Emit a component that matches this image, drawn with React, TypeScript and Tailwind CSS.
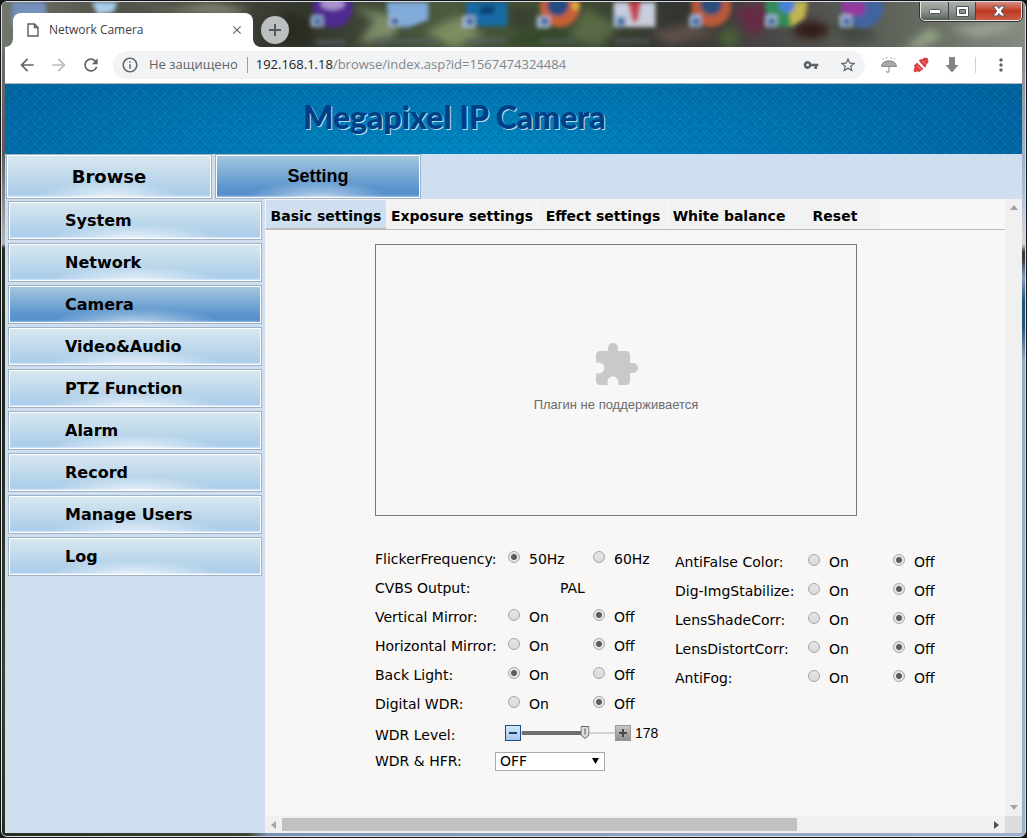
import { useState } from "react";
import {
  MdArrowBack,
  MdArrowForward,
  MdClose,
  MdExtension,
  MdInfoOutline,
  MdMoreVert,
  MdRefresh,
  MdStarBorder,
  MdVpnKey
} from "react-icons/md";

/* -------------------- Data -------------------- */

interface RadioRow {
  name: string;
  label: string;
  options: string[];
  value: string;
}

const menuItems = [
  "System",
  "Network",
  "Camera",
  "Video&Audio",
  "PTZ Function",
  "Alarm",
  "Record",
  "Manage Users",
  "Log"
];

const subTabs = [
  { title: "Basic settings", width: "w-[120px]" },
  { title: "Exposure settings", width: "w-[150px]" },
  { title: "Effect settings", width: "w-[130px]" },
  { title: "White balance", width: "w-[120px]" },
  { title: "Reset", width: "w-[90px]" }
];

const flicker: RadioRow = { name: "flicker", label: "FlickerFrequency:", options: ["50Hz", "60Hz"], value: "50Hz" };

const leftRows: RadioRow[] = [
  { name: "vmirror", label: "Vertical Mirror:", options: ["On", "Off"], value: "Off" },
  { name: "hmirror", label: "Horizontal Mirror:", options: ["On", "Off"], value: "Off" },
  { name: "backlight", label: "Back Light:", options: ["On", "Off"], value: "On" },
  { name: "dwdr", label: "Digital WDR:", options: ["On", "Off"], value: "Off" }
];

const rightRows: RadioRow[] = [
  { name: "antifalse", label: "AntiFalse Color:", options: ["On", "Off"], value: "Off" },
  { name: "stabilize", label: "Dig-ImgStabilize:", options: ["On", "Off"], value: "Off" },
  { name: "lensshade", label: "LensShadeCorr:", options: ["On", "Off"], value: "Off" },
  { name: "lensdistort", label: "LensDistortCorr:", options: ["On", "Off"], value: "Off" },
  { name: "antifog", label: "AntiFog:", options: ["On", "Off"], value: "Off" }
];

const glossy =
  "bg-[radial-gradient(ellipse_34%_40%_at_50%_100%,rgba(255,255,255,0.75),rgba(255,255,255,0)),linear-gradient(to_bottom,#d9e8ef,#b0d0e9_80%,#abcdea_92%,#e4f0fb)]";
const glossyActive =
  "bg-[radial-gradient(ellipse_34%_40%_at_50%_100%,rgba(255,255,255,0.6),rgba(255,255,255,0)),linear-gradient(to_bottom,#a6c9df,#5c95cd_75%,#5590cc_92%,#a9c9ec)]";

/* -------------------- Browser window -------------------- */

function Wallpaper() {
  return (
    <svg
      className="absolute left-0 top-0 h-[48px] w-full"
      viewBox="0 0 1027 48"
      preserveAspectRatio="none"
      aria-hidden="true"
    >
      <defs>
        <filter id="soft" x="-5%" y="-30%" width="110%" height="160%">
          <feGaussianBlur stdDeviation="2" />
        </filter>
        <filter id="softer" x="-5%" y="-30%" width="110%" height="160%">
          <feGaussianBlur stdDeviation="4.500" />
        </filter>
        <linearGradient id="grass" x1="0" x2="1" y1="0" y2="0">
          <stop offset="0" stopColor="#71776d" />
          <stop offset="0.08" stopColor="#5a5a50" />
          <stop offset="0.2" stopColor="#45443a" />
          <stop offset="0.3" stopColor="#33382d" />
          <stop offset="0.43" stopColor="#4c5a3f" />
          <stop offset="0.56" stopColor="#3f4b34" />
          <stop offset="0.66" stopColor="#343532" />
          <stop offset="0.75" stopColor="#4a4847" />
          <stop offset="0.9" stopColor="#646b60" />
          <stop offset="1" stopColor="#868c82" />
        </linearGradient>
      </defs>
      <rect width="1027" height="48" fill="url(#grass)" />
      <g filter="url(#softer)">
        <path d="M120 0l50 6 40-6 40 8-20 6-60-4z" fill="#7f8273" />
        <path d="M260 20l40 8-10 20h-30z" fill="#33352a" />
        <path d="M285 8l30 12-10 28-30-10z" fill="#2a2b22" />
        <path d="M350 4l24 14-16 24 34-6 10-20z" fill="#7c8c69" />
        <path d="M425 30l34-16 24 20-30 12z" fill="#7c8d60" />
        <path d="M500 40l50-18 30 16-40 8z" fill="#354a2a" />
        <path d="M510 4l28 4-10 20-18-4z" fill="#38402f" />
        <path d="M585 6l34 18-20 20-30-8z" fill="#596b44" />
        <path d="M650 30l40-8 30 10-50 12z" fill="#5b4f49" />
        <path d="M735 6l16 30 24-20-8-14z" fill="#662b44" />
        <circle cx="730" cy="36" r="10" fill="#486136" />
        <ellipse cx="812" cy="28" rx="18" ry="9" fill="#321b17" />
        <path d="M830 20l20 22 30-6-12-10z" fill="#43493f" />
        <path d="M905 46l26-20 14 8-20 12z" fill="#93a184" />
        <path d="M950 26l30 10 30-8 10-10z" fill="#9ba096" />
      </g>
      <g filter="url(#soft)">
        <path d="M10 0h34v20l-34 4z" fill="#7490bd" />
        <path d="M90 0h26l-4 10-16 3z" fill="#a9cdeb" />
        <circle cx="332" cy="6" r="20" fill="#4f2c91" />
        <ellipse cx="332" cy="2" rx="12" ry="6" fill="#a892cd" />
        <path d="M386 0h42v18l-22 8-18-6z" fill="#80abda" />
        <path d="M466 0h41v24h-41z" fill="#146ba5" />
        <path d="M480 4h14v8h-14z" fill="#0d426d" />
        <circle cx="560" cy="5" r="20" fill="#c86035" />
        <circle cx="558" cy="3" r="11" fill="#254c80" />
        <circle cx="576" cy="4" r="4" fill="#e2b13f" />
        <path d="M614 0h42v25h-42z" fill="#c8cedd" />
        <path d="M628 0h14l-4 20h-5z" fill="#c3434e" />
        <circle cx="712" cy="5" r="20" fill="#b85a38" />
        <circle cx="712" cy="2" r="11" fill="#294f7a" />
        <circle cx="787" cy="4" r="21" fill="#348c58" />
        <path d="M790 0h19l-3 16-14 9z" fill="#c2b44e" />
        <circle cx="788" cy="3" r="8" fill="#4b80d8" />
        <circle cx="864" cy="5" r="21" fill="#42639f" />
        <path d="M842 0h24v12l-20 4z" fill="#95379d" />
        <path d="M310 14h12v11h-12zM388 14h12v11h-12zM462 14h13v12h-13zM537 14h13v12h-13zM614 13h13v12h-13zM690 13h12v12h-12zM766 13h12v12h-12zM841 13h12v12h-12z" fill="#a8bfdb" />
        <path d="M313 16h7v7h-7zM391 16h7v7h-7zM466 16h7v7h-7zM541 16h7v7h-7zM618 16h7v7h-7zM693 16h7v7h-7zM769 16h7v7h-7zM844 16h7v7h-7z" fill="#2b5a9c" />
        <path d="M315 38h30v5h-30zM374 37h65v4h-65zM465 36h40v5h-40zM540 37h34v4h-34zM616 37h34v4h-34z" fill="#5c6270" opacity=".6" />
      </g>
    </svg>
  );
}

function WindowButtons() {
  return (
    <div className="flex h-[19px] overflow-hidden rounded-b-[5px] border border-t-0 border-[#e8e8e8] shadow-[0_0_0_1px_#333]">
      <button
        aria-label="Minimize"
        className="flex w-7 items-center justify-center border-r border-[#444] bg-linear-to-b from-[#a8b0a9] via-[#8c958e] to-[#57615b]"
      >
        <svg width="14" height="8" viewBox="0 0 14 8">
          <rect x="1.500" y="2.500" width="11" height="4" rx="1" fill="#fff" stroke="#50535e" />
        </svg>
      </button>
      <button
        aria-label="Maximize"
        className="flex w-[27px] items-center justify-center border-r border-[#444] bg-linear-to-b from-[#a8b0a9] via-[#8c958e] to-[#66716a]"
      >
        <svg width="13" height="11" viewBox="0 0 13 11">
          <path d="M.5.5h12v10H.500zM3.500 3.500h6v4h-6z" fill="#fff" fillRule="evenodd" stroke="#50535e" />
        </svg>
      </button>
      <button
        aria-label="Close"
        className="flex w-[45px] items-center justify-center bg-linear-to-b from-[#d98b7d] via-[#bd3a22] to-[#cf5a40]"
      >
        <svg width="14" height="12" viewBox="0 0 14 12">
          <path
            d="M1 1h4l2 2.500L9 1h4L9.300 6 13 11H9L7 8.500 5 11H1l3.700-5z"
            fill="#fff"
            stroke="#50535e"
          />
        </svg>
      </button>
    </div>
  );
}

function TitleBar() {
  return (
    <div className="flex h-[45px] items-start justify-between">
      <div className="flex items-end pt-[11px]">
        <svg width="8" height="34" viewBox="0 0 8 34" aria-hidden="true">
          <path d="M8 26v8H0a8 8 0 0 0 8-8z" fill="#fff" />
        </svg>
        <div className="flex h-[34px] w-[240px] items-center rounded-t-lg bg-white pl-[14px] pr-2">
          <svg width="12" height="14" viewBox="0 0 12 14" aria-hidden="true">
            <path d="M1 1h6.500L11 4.500V13H1zM7.500 1v3.500H11" fill="none" stroke="#5a5d62" strokeWidth="1.400" />
          </svg>
          <span className="ml-[10px] flex-1 text-[12px] text-[#3c4043]">Network Camera</span>
          <button aria-label="Close tab" className="flex size-4 items-center justify-center text-[#5f6368]">
            <MdClose size={14} />
          </button>
        </div>
        <svg width="8" height="34" viewBox="0 0 8 34" aria-hidden="true">
          <path d="M0 26v8h8a8 8 0 0 1-8-8z" fill="#fff" />
        </svg>
        <button
          aria-label="New tab"
          className="mb-[3px] flex size-7 items-center justify-center rounded-full bg-[#bcbfbf]"
        >
          <svg width="12" height="12" viewBox="0 0 12 12">
            <path d="M6 0v12M0 6h12" stroke="#55585c" strokeWidth="2" />
          </svg>
        </button>
      </div>
      <WindowButtons />
    </div>
  );
}

function AddressBar() {
  return (
    <div className="flex h-9 items-center border-b border-[#b6b4b6] bg-white text-[#5f6368] box-content">
      <div className="flex items-center gap-3 pl-3">
        <button aria-label="Back"><MdArrowBack size={20} /></button>
        <button aria-label="Forward" className="text-[#babcbe]"><MdArrowForward size={20} /></button>
        <button aria-label="Reload"><MdRefresh size={20} /></button>
      </div>
      <div className="ml-3 flex h-7 flex-1 items-center rounded-full bg-[#f1f3f4] px-2">
        <MdInfoOutline size={18} className="shrink-0" />
        <span className="ml-[10px] whitespace-nowrap text-[13px]">Не защищено</span>
        <span className="ml-[9px] h-4 w-px bg-[#9aa0a6]" />
        <div className="ml-2 flex-1 whitespace-nowrap text-[13px] text-[#80868b]">
          <span className="text-[#202124]">192.168.1.18</span>/browse/index.asp?id=1567474324484
        </div>
        <div className="flex items-center gap-5">
          <button aria-label="Passwords"><MdVpnKey size={16} /></button>
          <button aria-label="Bookmark"><MdStarBorder size={18} /></button>
        </div>
      </div>
      <div className="ml-4 flex items-center gap-4">
        <button aria-label="Umbrella">
          <svg width="16" height="16" viewBox="0 0 16 16">
            <path d="M.5 9.500C.8 5.800 4 3.800 8 3.800s7.200 2 7.500 5.700H.5z" fill="#a6a8aa" stroke="#77797c" strokeWidth=".8" />
            <path d="M8 9.500v4.500a1.300 1.300 0 0 1-2.600 0" fill="none" stroke="#8a8c8e" strokeWidth="1.100" />
            <path d="M3 1l-1 1.500M6 0l-.5 1.700M10 0l.5 1.700M13 1l1 1.500" stroke="#9a9c9e" />
          </svg>
        </button>
        <button aria-label="Plug">
          <svg width="16" height="16" viewBox="0 0 16 16">
            <path d="M6.500 3l3-.5L11 1l3.500.5.500 4-2 1.500-.5 3-2-1-3-3.500zM4 6l6 6-2 1-1.500 1.500-2-.5L1.500 15 1 13l1-2.500-.5-2z" fill="#e14344" stroke="#c02a2d" strokeWidth=".7" />
            <path d="M9.500 4l3 2.500M4.500 9l3.500 3" stroke="#f3908e" />
            <path d="M6.300 5l4.800 5-1 1.200-5-5z" fill="#fff" />
          </svg>
        </button>
        <button aria-label="Downloads">
          <svg width="14" height="16" viewBox="0 0 14 16">
            <path d="M4 0h6v8h3.500L7 15.500.5 8H4z" fill="#858585" />
          </svg>
        </button>
        <span className="h-4 w-px bg-[#cfd1d4]" />
      </div>
      <button aria-label="Menu" className="ml-[15px] mr-[11px]"><MdMoreVert size={20} /></button>
    </div>
  );
}

/* -------------------- Camera page -------------------- */

function Banner() {
  return (
    <header className="relative flex h-[70px] items-center bg-[radial-gradient(ellipse_60%_170%_at_45%_100%,#0089c4,#00619d)] pb-1 pl-[298px]">
      <svg className="absolute inset-0 h-full w-full" aria-hidden="true">
        <defs>
          <pattern id="weave" width="10" height="10" patternUnits="userSpaceOnUse">
            <path d="M0 0l10 10M10 0L0 10" stroke="#1aa0cf" strokeOpacity=".38" strokeWidth=".8" />
            <path d="M0 1.500l8.500 8.500M10 1.500L1.500 10" stroke="#004c86" strokeOpacity=".5" strokeWidth=".9" />
          </pattern>
        </defs>
        <rect width="100%" height="100%" fill="url(#weave)" />
      </svg>
      <h1 className="relative font-['Lato',sans-serif] text-[32px] font-black leading-9 text-[#003f86] [text-shadow:1px_1px_0_#b9dcec]">
        Megapixel IP Camera
      </h1>
    </header>
  );
}

function RadioLine({ row }: { row: RadioRow }) {
  const [value, setValue] = useState(row.value);

  return (
    <div role="radiogroup" aria-label={row.label} className="flex h-[29px] items-center">
      <span className="w-[133px] whitespace-nowrap">{row.label}</span>
      {row.options.map(option => (
        <label key={option} className="flex w-[85px] items-center gap-[9px] pt-px">
          <input
            type="radio"
            name={row.name}
            checked={value === option}
            onChange={() => setValue(option)}
            className="mb-1 size-3 appearance-none rounded-full border border-[#a6a6a6] bg-linear-to-b from-[#e6e6e6] to-[#dadada] checked:bg-[radial-gradient(circle,#5c5c5c_0,#5c5c5c_2.5px,#e6e6e6_3.5px)]"
          />
          {option}
        </label>
      ))}
    </div>
  );
}

function LevelSlider() {
  const [level, setLevel] = useState(178);
  // the 9px thumb stays inside the track at both ends
  const position = `calc(5px + (100% - 9px) * ${level / 255})`;

  return (
    <div className="flex h-[29px] items-center">
      <label htmlFor="wdr-level" className="w-[130px] pt-1">WDR Level:</label>
      <button
        aria-label="Decrease"
        onClick={() => setLevel(Math.max(0, level - 1))}
        className="flex size-4 items-center justify-center border border-[#1b4c86] bg-linear-to-b from-[#d5e7f8] to-[#a5c8ea]"
      >
        <span className="h-[2px] w-2 bg-[#1b3f74]" />
      </button>
      <div className="relative flex h-4 w-[94px] items-center">
        <div className="h-[2px] w-full bg-[#d2d2d2]" />
        <div className="absolute left-px h-1 bg-[#6f6f6f]" style={{ width: position }} />
        <svg
          className="absolute top-px -translate-x-1/2"
          style={{ left: position }}
          width="9"
          height="13"
          viewBox="0 0 9 13"
          aria-hidden="true"
        >
          <path d="M.5.5h8v8.500l-4 3.500-4-3.500z" fill="#dcdcdc" stroke="#666" />
          <path d="M4.500 2.500v6" stroke="#555" />
        </svg>
        <input
          id="wdr-level"
          type="range"
          min={0}
          max={255}
          value={level}
          onChange={e => setLevel(Number(e.target.value))}
          className="absolute inset-0 w-full cursor-pointer opacity-0"
        />
      </div>
      <button
        aria-label="Increase"
        onClick={() => setLevel(Math.min(255, level + 1))}
        className="flex size-4 items-center justify-center border border-[#9a9a9a] bg-linear-to-b from-[#c9c9c9] to-[#8f8f8f]"
      >
        <svg width="8" height="8" viewBox="0 0 8 8">
          <path d="M4 0v8M0 4h8" stroke="#4a4a4a" strokeWidth="2" />
        </svg>
      </button>
      <output htmlFor="wdr-level" className="ml-1 font-['Liberation_Sans',sans-serif]">{level}</output>
    </div>
  );
}

function BasicSettings() {
  return (
    <div className="flex-1 pl-[110px] pt-[14px]">
      <div className="flex h-[272px] w-[482px] flex-col items-center justify-center border border-[#75777a] bg-[#f7f7f7] pb-[5px] font-['Liberation_Sans',sans-serif] text-[13px] text-[#6b6b6b]">
        <MdExtension size={48} className="text-[#c9c9c9]" />
        <p className="mt-[6px] leading-5">Плагин не поддерживается</p>
      </div>

      <form className="mt-7 flex text-[14px] leading-5 text-black">
        <div className="w-[300px] *:w-max">
          <RadioLine row={flicker} />
          <div className="flex h-[29px] items-center">
            <span className="w-[185px]">CVBS Output:</span>
            <span>PAL</span>
          </div>
          {leftRows.map(row => (
            <RadioLine key={row.name} row={row} />
          ))}
          <LevelSlider />
          <div className="flex h-7 items-center">
            <label htmlFor="wdr-hfr" className="w-[120px]">WDR &amp; HFR:</label>
            <div className="relative flex items-center">
              <select
                id="wdr-hfr"
                className="h-[19px] w-[110px] appearance-none border border-[#a9a9a9] bg-white pl-1 text-[14px] leading-4"
              >
                <option>OFF</option>
                <option>ON</option>
              </select>
              <svg className="pointer-events-none absolute right-[6px]" width="7" height="6" viewBox="0 0 7 6" aria-hidden="true">
                <path d="M0 0h7L3.500 6z" fill="#000" />
              </svg>
            </div>
          </div>
        </div>
        <div className="pt-[3px]">
          {rightRows.map(row => (
            <RadioLine key={row.name} row={row} />
          ))}
        </div>
      </form>
    </div>
  );
}

function VerticalScrollbar() {
  return (
    <div className="flex w-[17px] flex-col items-center justify-between bg-[#f0f0f0] py-[6px]">
      <svg width="8" height="5" viewBox="0 0 8 5" aria-hidden="true">
        <path d="M4 0l4 5H0z" fill="#a3a3a3" />
      </svg>
      <svg width="8" height="5" viewBox="0 0 8 5" aria-hidden="true">
        <path d="M0 0h8L4 5z" fill="#a3a3a3" />
      </svg>
    </div>
  );
}

function HorizontalScrollbar() {
  return (
    <div className="flex h-[17px] bg-[#dcdcdc]">
      <div className="flex flex-1 items-center bg-[#f0f0f0] px-[6px]">
        <svg width="5" height="8" viewBox="0 0 5 8" aria-hidden="true">
          <path d="M5 0v8L0 4z" fill="#a3a3a3" />
        </svg>
        <div className="mx-[6px] flex-1">
          <div className="h-[13px] w-[73%] bg-[#c1c1c1]" />
        </div>
        <svg width="5" height="8" viewBox="0 0 5 8" aria-hidden="true">
          <path d="M0 0v8l5-4z" fill="#505050" />
        </svg>
      </div>
      <div className="w-[17px]" />
    </div>
  );
}

export default function App() {
  const [section, setSection] = useState("Camera");
  const [tab, setTab] = useState("Basic settings");

  return (
    <div className="flex min-h-screen flex-col overflow-hidden bg-[#15161c] p-px font-['Open_Sans',sans-serif]">
      <div className="relative flex flex-1 flex-col overflow-hidden rounded-md border border-[#d9dde2] bg-[linear-gradient(to_right,#26301f,#3c4434_24%,#7c93b5_26%,#9db1cc)] px-[3px] pb-[3px]">
        <div className="absolute inset-y-0 left-0 w-[3px] bg-[linear-gradient(to_bottom,#777,#5a5a5a_18%,#b5b5b5_29%,#26301f_29.500%,#1d241b_45%,#39432f_80%,#26301f)]" />
        <div className="absolute inset-y-0 right-0 w-[3px] bg-[linear-gradient(to_bottom,#777,#a9bdd5_22%,#d2d6dc_29%,#33363c_30%,#3a3f49_31%,#7f9cc0_33%,#1f5677_36%,#24557b_39%,#94a9c6_43%,#9db1cc)]" />
        <Wallpaper />

        <div className="relative flex flex-1 flex-col">
          <TitleBar />
          <AddressBar />

          <div className="flex flex-1 flex-col bg-[#d0dfef] font-['Verdana','DejaVu_Sans',sans-serif]">
            <Banner />

            <nav className="flex h-[45px] gap-[3px] pl-px text-[18px] font-bold text-black">
              <a
                href="#browse"
                className={`flex w-[206px] items-center justify-center border border-[#9db1c7] shadow-[inset_0_0_0_1px_#fff] ${glossy}`}
              >
                Browse
              </a>
              <a
                href="#setting"
                className={`flex w-[206px] items-center justify-center border border-[#9db1c7] font-['Liberation_Sans',sans-serif] shadow-[inset_0_0_0_1px_#fff] ${glossyActive}`}
              >
                Setting
              </a>
            </nav>

            <div className="flex flex-1">
              <aside className="flex w-[260px] shrink-0 flex-col gap-[3px] px-[3px] pt-[2px]">
                {menuItems.map(item => (
                  <button
                    key={item}
                    onClick={() => setSection(item)}
                    className={`h-[39px] border border-[#9db1c7] pl-14 text-left text-[16px] font-bold text-black shadow-[inset_0_0_0_1px_#fff] ${
                      section === item ? glossyActive : glossy
                    }`}
                  >
                    {item}
                  </button>
                ))}
              </aside>

              <main className="flex min-w-0 flex-1 flex-col bg-[#f8f7f5]">
                <div className="flex flex-1">
                  <div className="flex min-w-0 flex-1 flex-col">
                    <div className="flex h-[31px] gap-px border-b border-[#bbb] pl-px pt-px">
                      {subTabs.map(({ title, width }) => (
                        <button
                          key={title}
                          onClick={() => setTab(title)}
                          className={`whitespace-nowrap pt-[3px] text-center text-[14px] font-bold text-black ${width} ${
                            tab === title ? "bg-[#d0dfef] shadow-[inset_0_-1px_0_#bbb]" : "bg-[#f2f2f2]"
                          }`}
                        >
                          {title}
                        </button>
                      ))}
                    </div>
                    <BasicSettings />
                  </div>
                  <VerticalScrollbar />
                </div>
                <HorizontalScrollbar />
              </main>
            </div>
          </div>
        </div>
      </div>
    </div>
  );
}
